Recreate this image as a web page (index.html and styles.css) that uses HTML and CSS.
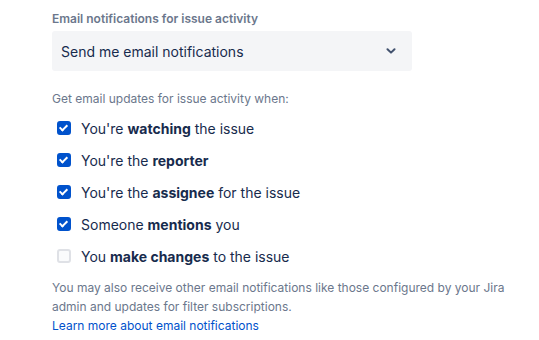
FILE: index.html
```html
<!DOCTYPE html>
<html lang="en">
<head>
    <meta charset="UTF-8">
    <title>Email notifications</title>
    <link rel="stylesheet" href="styles.css">
</head>
<body>
    <div class="panel">
        <label class="field-label" for="issue-email">Email notifications for issue activity</label>
        <div class="select" id="issue-email">
            <span class="select-value">Send me email notifications</span>
            <svg class="chevron" width="10" height="6" viewBox="0 0 10 6"><path d="M1.5 1.2 L5 4.6 L8.5 1.2" fill="none" stroke="#42526e" stroke-width="2" stroke-linecap="round" stroke-linejoin="round"/></svg>
        </div>

        <p class="helper">Get email updates for issue activity when:</p>

        <ul class="options">
            <li class="option"><span class="box checked"></span>You're <b>watching</b> the issue</li>
            <li class="option"><span class="box checked"></span>You're the <b>reporter</b></li>
            <li class="option"><span class="box checked"></span>You're the <b>assignee</b> for the issue</li>
            <li class="option"><span class="box checked"></span>Someone <b>mentions</b> you</li>
            <li class="option"><span class="box"></span>You <b>make changes</b> to the issue</li>
        </ul>

        <p class="note">You may also receive other email notifications like those configured by your Jira admin and updates for filter subscriptions.</p>
        <a class="learn" href="#">Learn more about email notifications</a>
    </div>
</body>
</html>
```

FILE: styles.css
```css
/* Colours */
:root {
    --text: #172b4d;
    --subtle: #6b778c;
    --field: #f4f5f7;
    --blue: #0052cc;
    --border: #dfe1e6;
}

* {
    margin: 0;
    padding: 0;
    box-sizing: border-box;
}

body {
    font-family: Inter, "Noto Sans", sans-serif;
    color: var(--text);
    background: #fff;
}

.panel {
    width: 539px;
    padding: 11px 0 0 52px;
}

.field-label {
    display: block;
    font-size: 12px;
    font-weight: 600;
    color: var(--subtle);
    line-height: 16px;
}

/* Select */
.select {
    width: 360px;
    height: 40px;
    margin-top: 4px;
    background: var(--field);
    border-radius: 3px;
    display: flex;
    align-items: center;
    justify-content: space-between;
    padding: 0 16px 0 9px;
}

.select-value {
    font-size: 14px;
}

.helper {
    margin-top: 20px;
    font-size: 12px;
    line-height: 16px;
    color: var(--subtle);
}

/* Checkbox list */
.options {
    list-style: none;
    margin-top: 5px;
}

.option {
    display: flex;
    align-items: center;
    height: 32px;
    font-size: 14px;
    white-space: pre;
}

.option b {
    font-weight: 700;
}

.box {
    width: 14px;
    height: 14px;
    margin: 0 10px 0 5px;
    border-radius: 3px;
    border: 2px solid var(--border);
    background: #fafbfc;
    position: relative;
}

.box.checked {
    background: var(--blue);
    border-color: var(--blue);
}

.box.checked::after {
    content: "";
    position: absolute;
    left: 2px;
    top: 0px;
    width: 3px;
    height: 6px;
    border: solid #fff;
    border-width: 0 2px 2px 0;
    transform: rotate(45deg);
}

.note {
    margin-top: 6px;
    font-size: 12px;
    line-height: 19px;
    color: var(--subtle);
}

.learn {
    display: block;
    font-size: 12px;
    line-height: 19px;
    color: var(--blue);
    text-decoration: none;
}
```
